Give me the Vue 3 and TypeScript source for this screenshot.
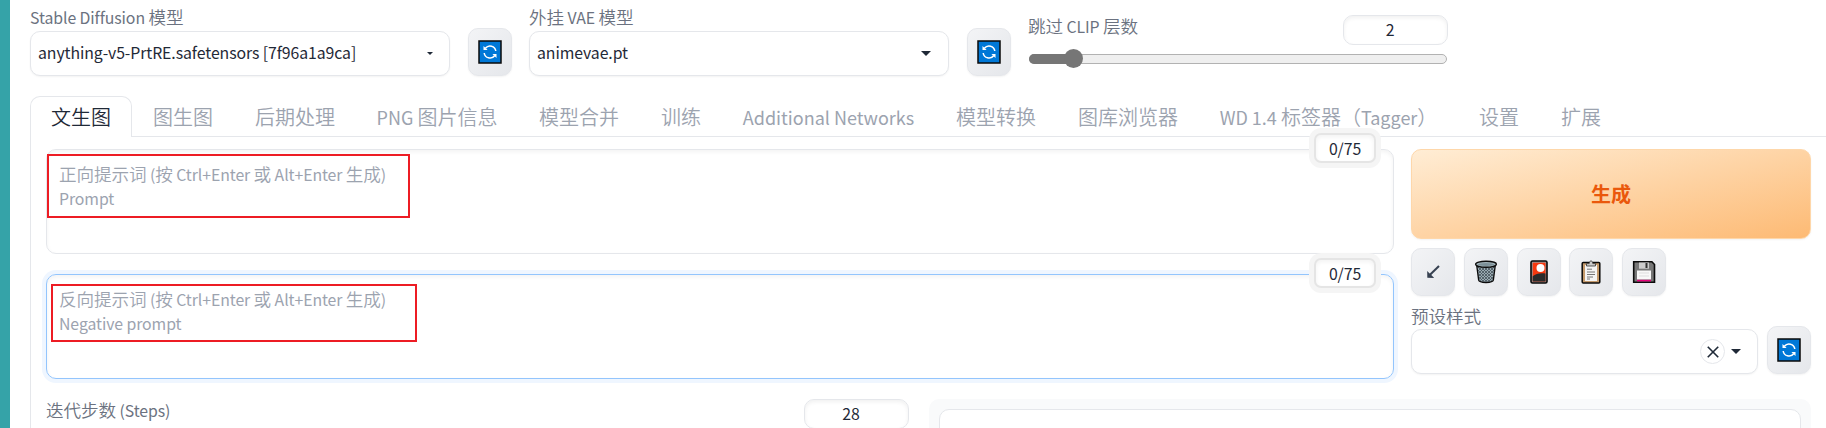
<script setup lang="ts">
import { h, type FunctionalComponent } from 'vue'

const Mixed: FunctionalComponent<{ text: string }> = (props) =>
  props.text
    .split(/([\x20-\x7e]+)/)
    .filter((part) => part.length > 0)
    .map((part) => h('span', { class: /^[\x20-\x7e]/.test(part) ? 'latin' : 'han' }, part))
Mixed.props = ['text']

const Refresh: FunctionalComponent = () =>
  h('svg', { width: 24, height: 24, viewBox: '0 0 24 24' }, [
    h('rect', { x: 1, y: 1, width: 22, height: 22, fill: '#0078d7', stroke: '#0a0a0a', 'stroke-width': 1.5 }),
    h('path', { d: 'M7.4 8.3A5.8 5.8 0 0 1 17.8 11M16.6 15.7A5.8 5.8 0 0 1 6.2 13', fill: 'none', stroke: '#fff', 'stroke-width': 1.5 }),
    h('path', { d: 'M5.5 5.9v4H9.6zM18.5 18.1v-4H14.4z', fill: '#fff' }),
  ])

interface Tab { label: string; width: number }
const tabs: Tab[] = [
  { label: '文生图', width: 102 },
  { label: '图生图', width: 102 },
  { label: '后期处理', width: 122 },
  { label: 'PNG 图片信息', width: 162 },
  { label: '模型合并', width: 122 },
  { label: '训练', width: 82 },
  { label: 'Additional Networks', width: 213 },
  { label: '模型转换', width: 122 },
  { label: '图库浏览器', width: 142 },
  { label: 'WD 1.4 标签器（Tagger）', width: 259 },
  { label: '设置', width: 82 },
  { label: '扩展', width: 82 },
]

const prompts = [
  { hint: '正向提示词 (按 Ctrl+Enter 或 Alt+Enter 生成)', name: 'Prompt', kind: 'positive' },
  { hint: '反向提示词 (按 Ctrl+Enter 或 Alt+Enter 生成)', name: 'Negative prompt', kind: 'negative' },
]
</script>

<template>
  <div class="page">
    <div class="edge"></div>
    <main>
      <header>
        <div class="field">
          <label><Mixed text="Stable Diffusion 模型" /></label>
          <div class="select">
            <span class="value model"><Mixed text="anything-v5-PrtRE.safetensors [7f96a1a9ca]" /></span>
            <svg class="small-caret" width="6" height="3" viewBox="0 0 6 3"><path d="M0 0h6L3 3z" fill="#1f2937" /></svg>
          </div>
        </div>
        <button class="tool"><Refresh /></button>
        <div class="field second">
          <label><Mixed text="外挂 VAE 模型" /></label>
          <div class="select">
            <span class="value"><Mixed text="animevae.pt" /></span>
            <svg width="10" height="5" viewBox="0 0 10 5"><path d="M0 0h10L5 5z" fill="#1f2937" /></svg>
          </div>
        </div>
        <button class="tool"><Refresh /></button>
        <div class="clip">
          <div class="clip-head">
            <label><Mixed text="跳过 CLIP 层数" /></label>
            <div class="number"><Mixed text="2" /></div>
          </div>
          <div class="track"><div class="fill"></div><div class="thumb"></div></div>
        </div>
      </header>

      <nav>
        <div v-for="(tab, i) in tabs" :key="tab.label" class="tab" :class="{ active: i === 0 }" :style="{ width: tab.width + 'px' }">
          <Mixed :text="tab.label" />
        </div>
      </nav>

      <section class="panel">
        <div class="top">
          <div class="prompts">
            <div v-for="p in prompts" :key="p.kind" class="prompt" :class="p.kind">
              <div class="line"><Mixed :text="p.hint" /></div>
              <div class="line"><Mixed :text="p.name" /></div>
              <div class="mark"></div>
              <div class="counter"><Mixed text="0/75" /></div>
            </div>
          </div>
          <div class="actions">
            <button class="generate">生成</button>
            <div class="tools">
              <button class="tool">
                <svg width="16" height="16" viewBox="0 0 16 16"><path d="M14 2L4.5 11.3" stroke="#374151" stroke-width="2" /><path d="M2.2 7l.1 6.8 6.9.1-2.4-2.3-2.4-2.3z" fill="#374151" /></svg>
              </button>
              <button class="tool">
                <svg width="24" height="24" viewBox="0 0 24 24">
                  <defs><pattern id="mesh" width="3" height="3" patternUnits="userSpaceOnUse"><path d="M0 0l3 3M3 0L0 3" stroke="#45525a" stroke-width=".8" /></pattern></defs>
                  <path d="M2.7 5l2 15.2c.6 3 14 3 14.6 0l2-15.2z" fill="#9aabb2" stroke="#0b0b0b" stroke-width="1.4" />
                  <path d="M3.5 7l1.9 13c.6 2.2 12.6 2.2 13.2 0l1.9-13z" fill="url(#mesh)" />
                  <ellipse cx="12" cy="4.3" rx="10.4" ry="3" fill="#a5b7bd" stroke="#0b0b0b" stroke-width="1.4" />
                  <ellipse cx="12" cy="4.5" rx="8" ry="1.5" fill="#7c9098" />
                </svg>
              </button>
              <button class="tool">
                <svg width="24" height="24" viewBox="0 0 24 24"><rect x="4" y="1" width="16" height="22" rx="1.5" fill="#9a9a9a" stroke="#080808" stroke-width="1.6" /><rect x="5.7" y="2.7" width="12.8" height="18.8" fill="#f7390f" /><circle cx="13.5" cy="8" r="4" fill="#fff" /><path d="M5.7 16.2c3-2.5 8-3.5 12.8-2.6v7.9H5.7z" fill="#2b2b2b" /></svg>
              </button>
              <button class="tool">
                <svg width="24" height="24" viewBox="0 0 24 24"><rect x="3.2" y="2.6" width="17.6" height="20.4" rx="1" fill="#c49a6c" stroke="#0b0b0b" stroke-width="1.5" /><path d="M6 5h12v16H6z" fill="#f5f5f5" /><path d="M7.5 6V3.6h2.7c.3-3.6 3.3-3.6 3.6 0h2.7V6z" fill="#ccc" stroke="#333" stroke-width=".8" /><path d="M8 9.2h5M8 12h8M8 14.5h8M8 17h6M8 19h3" stroke="#777" /></svg>
              </button>
              <button class="tool">
                <svg width="24" height="24" viewBox="0 0 24 24"><path d="M1.7 1.8h18.2l2.6 2.7v17.7H1.7z" fill="#777" stroke="#0b0b0b" stroke-width="1.6" /><path d="M7 2.5h10v6.2H7z" fill="#ccc" /><path d="M13.5 3h2v5h-2z" fill="#333" /><path d="M5 10.5h14v9H5z" fill="#f8f8f8" /><path d="M5 19.8h14v1.6H5z" fill="#e6007a" /><path d="M7 13h10M7 16h10" stroke="#ddd" /></svg>
              </button>
            </div>
            <label class="style-label"><Mixed text="预设样式" /></label>
            <div class="style-row">
              <div class="select">
                <span class="clear"><svg width="12" height="12" viewBox="0 0 11 11"><path d="M.7.7l9.6 9.6M10.3.7L.7 10.3" stroke="#1f2937" stroke-width="1.5" /></svg></span>
                <svg width="10" height="5" viewBox="0 0 10 5"><path d="M0 0h10L5 5z" fill="#1f2937" /></svg>
              </div>
              <button class="tool"><Refresh /></button>
            </div>
          </div>
        </div>
        <div class="bottom">
          <div class="steps">
            <label><Mixed text="迭代步数 (Steps)" /></label>
            <div class="number"><Mixed text="28" /></div>
          </div>
          <div class="gallery"><div class="canvas"></div></div>
        </div>
      </section>
    </main>
  </div>
</template>

<style>
body { background: #fff; overflow: hidden; }
.han { font-size: 1em; font-weight: 350; }
.latin { font-size: 0.9em; font-weight: 400; white-space: pre; }
</style>

<style scoped>
* { box-sizing: border-box; }
.page {
  display: flex;
  width: 1826px;
  height: 428px;
  overflow: hidden;
  color: #1f2937;
  font: 400 17.6px "Noto Sans CJK SC", sans-serif;
  letter-spacing: -0.08px;
}
svg { display: block; flex: none; }
.edge { width: 10px; flex: none; background: #35a3a8; }
main { flex: 1; min-width: 0; padding-left: 20px; display: flex; flex-direction: column; }
label { color: #6b7280; white-space: nowrap; display: block; }
header { display: flex; flex: none; height: 96px; align-items: flex-start; }
.field { width: 420px; padding-top: 5px; margin-right: 18px; }
.field label { height: 26px; line-height: 24px; }
.field.second { margin-left: 17px; }
.select {
  height: 45px;
  border: 1px solid #e5e7eb;
  border-radius: 10px;
  background: #fff;
  box-shadow: 0 1px 2px rgba(0, 0, 0, .05);
  display: flex;
  align-items: center;
  padding: 0 17px 0 7px;
}
.value { flex: 1; white-space: nowrap; line-height: 24px; margin-top: -2px; }
.small-caret { margin-right: -1px; }
.tool {
  width: 44px;
  height: 48px;
  flex: none;
  padding: 0 0 1px;
  border: 1px solid #e5e7eb;
  border-radius: 10px;
  background: linear-gradient(to bottom right, #f3f4f6, #e5e7eb);
  box-shadow: 0 1px 2px rgba(0, 0, 0, .05);
  display: flex;
  align-items: center;
  justify-content: center;
}
header .tool { margin-top: 28px; }
.clip { width: 420px; margin-left: 17px; padding-top: 15px; }
.clip-head { display: flex; justify-content: space-between; height: 39px; }
.clip-head label { line-height: 22px; }
.number {
  width: 105px;
  height: 30px;
  flex: none;
  border: 1px solid #e5e7eb;
  border-radius: 10px;
  box-shadow: inset 0 2px 4px rgba(0, 0, 0, .06);
  line-height: 26px;
  text-align: center;
  padding-right: 11px;
}
.track {
  position: relative;
  width: 418px;
  height: 10px;
  margin-left: 1px;
  border: 1px solid #b2b2b2;
  border-radius: 5px;
  background: #efefef;
}
.fill { width: 46px; height: 10px; margin: -1px; border-radius: 5px 0 0 5px; background: #767676; }
.thumb { position: absolute; left: 34px; top: -6px; width: 19px; height: 19px; border-radius: 50%; background: #767676; }
nav { display: flex; flex: none; height: 41px; font-size: 20px; letter-spacing: 0; border-bottom: 1px solid #e5e7eb; }
.tab { height: 41px; line-height: 41px; flex: none; text-align: center; white-space: nowrap; color: #9ca3af; }
.tab.active { color: #1f2937; border: 1px solid #e5e7eb; border-bottom: 0; border-radius: 10px 10px 0 0; background: #fff; line-height: 39px; }
.panel { flex: 1; border-left: 1px solid #e5e7eb; padding: 12px 15px 0; }
.top { display: flex; gap: 17px; height: 250px; }
.prompts { width: 1348px; display: flex; flex-direction: column; gap: 20px; }
.prompt {
  position: relative;
  height: 105px;
  border: 1px solid #e5e7eb;
  border-radius: 10px;
  box-shadow: inset 0 2px 4px rgba(0, 0, 0, .05);
  padding: 12px 12px;
  color: #9ca3af;
}
.negative { border-color: #93c5fd; box-shadow: 0 0 0 4px #eff6ff, inset 0 2px 4px rgba(0, 0, 0, .05); }
.line { height: 24px; line-height: 24px; white-space: nowrap; }
.mark { position: absolute; border: 2px solid #ed1c24; }
.positive .mark { left: 0; top: 4px; width: 363px; height: 64px; }
.negative .mark { left: 4px; top: 9px; width: 366px; height: 58px; }
.counter {
  position: absolute;
  right: 17px;
  top: -17px;
  width: 62px;
  height: 30px;
  border: 2px solid #e5e5e5;
  border-radius: 7px;
  background: #fff;
  box-shadow: 0 0 0 5px #f5f5f5, inset 0 2px 4px rgba(0, 0, 0, .05);
  color: #1f2937;
  line-height: 25px;
  text-align: center;
}
.actions { width: 400px; display: flex; flex-direction: column; }
.generate {
  height: 90px;
  padding-bottom: 3px;
  border: 1px solid #fed7aa;
  border-radius: 10px;
  background: linear-gradient(to bottom right, #ffedd5, #fdba74);
  box-shadow: 0 1px 2px rgba(0, 0, 0, .05);
  color: #ea580c;
  font: 700 20px "Noto Sans CJK SC", sans-serif;
}
.tools { display: flex; gap: 8.75px; margin-top: 9px; }
.style-label { height: 24px; line-height: 24px; margin-top: 8px; }
.style-row { display: flex; gap: 9px; align-items: flex-end; margin-top: -2px; }
.style-row .select { flex: 1; justify-content: flex-end; padding-right: 16px; }
.clear { width: 25px; height: 25px; margin-right: 6px; border: 1px solid #e5e7eb; border-radius: 50%; display: flex; align-items: center; justify-content: center; }
.bottom { display: flex; gap: 20px; }
.steps { width: 863px; display: flex; justify-content: space-between; }
.steps label { line-height: 22px; }
.gallery { width: 882px; height: 60px; flex: none; padding: 10px; border-radius: 10px 10px 0 0; background: #f9fafb; }
.canvas { height: 60px; border: 1px solid #e5e7eb; border-radius: 10px; background: #fff; }
</style>
